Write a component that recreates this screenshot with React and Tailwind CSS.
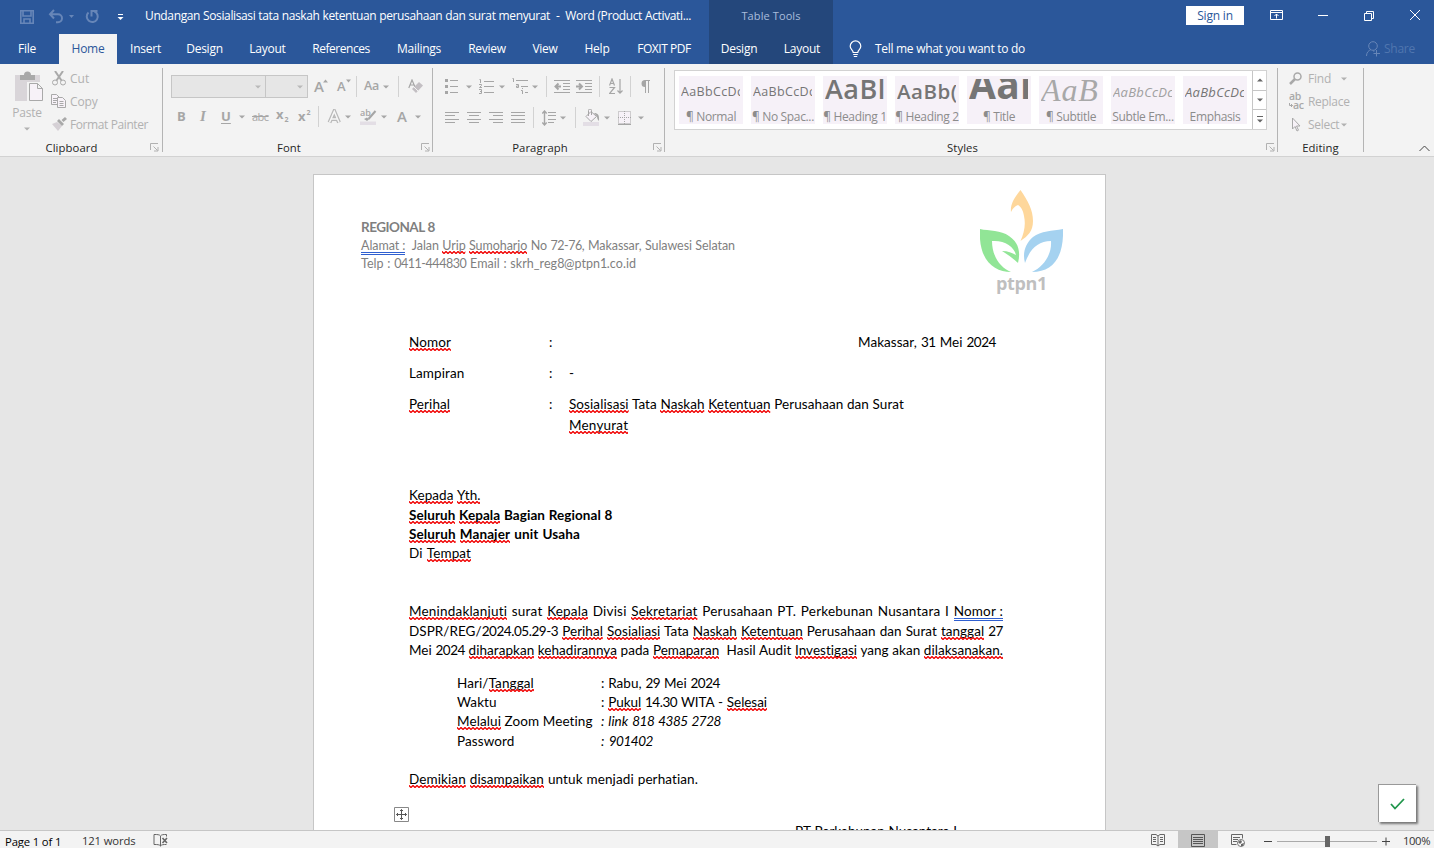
import React from "react";

const G = "#b1b1b1";

function Caret({ className = "" }) {
  return (
    <svg className={`shrink-0 ${className}`} width="6" height="4" viewBox="0 0 6 4">
      <path d="M0 .5h6L3 3.5z" fill="currentColor" />
    </svg>
  );
}

function Sep({ className = "" }) {
  return <div className={`h-[21px] w-px shrink-0 bg-[#d2d2d2] ${className}`} />;
}

function Launcher({ className = "" }) {
  return (
    <svg className={`absolute bottom-[4px] ${className}`} width="9" height="9" viewBox="0 0 9 9" fill="none" stroke={G}>
      <path d="M.5 7V.5H8M3.5 3.5l4 4M8 4v4H4" />
    </svg>
  );
}

function Group({ className, label, launcher, children }) {
  return (
    <div className={`relative flex shrink-0 flex-col ${className}`}>
      <div className="h-[76px]">{children}</div>
      <div className="h-4 text-center text-[11.3px] leading-4 tracking-[0.1px] text-[#262626]">{label}</div>
      {launcher && <Launcher className={launcher} />}
    </div>
  );
}

function GroupLine() {
  return <div className="mt-1 h-[84px] w-px shrink-0 bg-[#b4b4b4]" />;
}

function Lines({ className = "", rows, w = 14, h = 12 }) {
  return (
    <svg className={`shrink-0 ${className}`} width={w} height={h} viewBox={`0 0 ${w} ${h}`} stroke="#a6a6a6">
      {rows.map(([x1, x2, y], i) => (
        <path key={i} d={`M${x1} ${y}.5H${x2}`} />
      ))}
    </svg>
  );
}

function Wavy({ children }) {
  return (
    <span className="relative inline-block">
      {children}
      <svg className="absolute top-[15px] left-0 h-[3px] w-full" aria-hidden="true">
        <rect width="100%" height="3" fill="url(#wave)" />
      </svg>
    </span>
  );
}

function Double({ children }) {
  return (
    <span className="relative inline-block">
      {children}
      <span className="absolute top-[16px] left-0 h-[3px] w-full border-y border-[#2f5fd0]" />
    </span>
  );
}

/* Figures are set a little tighter than letters. */
function figures(text) {
  return text.split(/(\d[\d.\-]*\d|\d)/).map((s, i) =>
    /^\d/.test(s) ? <span key={i} className="tracking-[-0.45px]">{s}</span> : s
  );
}

/* _word_ gets a spelling underline, =word= a grammar underline. */
function Line({ className = "", text }) {
  return (
    <div className={`h-[19px] shrink-0 leading-[19px] whitespace-nowrap [text-align-last:justify] ${className}`}>
      {text.replace("skrh_reg8", "skrh\u0001reg8").split(/(_[^_]+_|=[^=]+=)/).map((p, i) =>
        p.startsWith("_") ? <Wavy key={i}>{p.slice(1, -1)}</Wavy>
          : p.startsWith("=") ? <Double key={i}>{p.slice(1, -1)}</Double>
            : <React.Fragment key={i}>{figures(p.replace("\u0001", "_"))}</React.Fragment>
      )}
    </div>
  );
}

const TABS = [
  ["Insert", "w-[55px]"],
  ["Design", "w-[63px]"],
  ["Layout", "w-[63px]"],
  ["References", "w-[84px] tracking-[-0.45px]"],
  ["Mailings", "w-[72px]"],
  ["Review", "w-[64px]"],
  ["View", "w-[52px]"],
  ["Help", "w-[52px]"],
  ["FOXIT PDF", "w-[82px] tracking-[-0.45px]"],
];

const STYLES = [
  ["AaBbCcDc", "¶ Normal", "text-[12.5px] tracking-[0.35px] text-[#757575]"],
  ["AaBbCcDc", "¶ No Spac...", "text-[12.5px] tracking-[0.35px] text-[#757575]"],
  ["AaBl", "¶ Heading 1", "-mt-[7px] text-[27px] font-semibold tracking-[0.5px] text-[#757575]"],
  ["AaBb(", "¶ Heading 2", "-mt-[2px] text-[20.5px] font-semibold tracking-[0.5px] text-[#757575]"],
  ["Aal", "¶ Title", "-mt-[16px] text-[39px] font-bold tracking-[0.3px] text-[#757575]"],
  ["AaB", "¶ Subtitle", "-mt-[6px] font-['Liberation_Serif',serif] text-[32px] italic tracking-[0.9px] text-[#a8a8a8]"],
  ["AaBbCcDc", "Subtle Em...", "text-[13px] italic tracking-[0.3px] text-[#a0a0a0]"],
  ["AaBbCcDc", "Emphasis", "text-[13px] italic tracking-[0.3px] text-[#757575]"],
];

function TitleBar() {
  return (
    <div className="flex h-[34px] shrink-0 text-white">
      <svg className="mt-[9px] ml-[20px] shrink-0 text-[#6786b8]" width="104" height="16" viewBox="0 0 104 16" fill="none" stroke="currentColor">
        <path strokeWidth="1.6" d="M.8 1.8h12.4v12.4H.8zM3 2v5h8V2M4 14v-4h6v4" />
        <path strokeWidth="2" d="M34 1l-4 4.200 4 4.300M30.500 5.200h7.500a4 4 0 0 1 0 8H36" />
        <path fill="currentColor" stroke="none" d="M49 6h5l-2.500 3z" />
        <path strokeWidth="2" d="M74.500 2.500a5.500 5.500 0 1 1-6 1M71.500 7.500V2h6" />
        <path stroke="#fff" d="M98 5.500h5" />
        <path fill="#fff" stroke="none" d="M97.500 8h6l-3 3z" />
      </svg>
      <Line className="mt-[6px] ml-[21px] w-[546px] text-[12px] tracking-[-0.37px]" text="Undangan Sosialisasi tata naskah ketentuan perusahaan dan surat menyurat &nbsp;-&nbsp; Word (Product Activati..." />
      <div className="ml-[18px] flex w-[124px] justify-center bg-[#24477b] pt-[7px] text-[11px] leading-[18px] tracking-[0.1px] text-[#a9bddb]">Table Tools</div>
      <div className="mt-[6px] ml-[353px] h-[19px] w-[58px] bg-white text-center text-[12px] leading-[19px] tracking-[-0.2px] text-[#2b579a]">Sign in</div>
      <svg className="mt-[9px] ml-[26px] shrink-0" width="152" height="13" viewBox="0 0 152 13" fill="none" stroke="#fff">
        <path d="M.5 1.500h12v9H.5zM.5 3.500h12M6.500 9.500V5M4.500 7l2-2 2 2" />
        <path d="M48 6.500h10M94.500 4.500h7v7h-7zM96.500 4.500v-2h7v7h-2" />
        <path d="M140 1l10 10M150 1l-10 10" />
      </svg>
    </div>
  );
}

function TabRow() {
  return (
    <div className="flex h-[30px] shrink-0 text-center text-[12px] leading-[30px] tracking-[-0.25px] whitespace-nowrap text-white">
      <div className="w-[54px]">File</div>
      <div className="mr-px ml-[5px] w-[58px] bg-[#f3f3f3] text-[#2b579a]">Home</div>
      {TABS.map(([t, c]) => <div key={t} className={c}>{t}</div>)}
      <div className="ml-[4px] flex w-[124px] bg-[#24477b]">
        <div className="w-[60px]">Design</div>
        <div className="ml-[2px] w-[62px]">Layout</div>
      </div>
      <svg className="mt-[6px] ml-[16px] shrink-0" width="13" height="18" viewBox="0 0 13 18" fill="none" stroke="#fff" strokeWidth="1.200">
        <path d="M4.200 12.500c0-2.500-3-3-3-6.300a5.300 5.300 0 0 1 10.600 0c0 3.300-3 3.800-3 6.300zM4.200 14.500h4.600M4.800 16.500h3.400" />
      </svg>
      <div className="ml-[13px] w-[150px] tracking-[-0.32px] [text-align-last:justify]">Tell me what you want to do</div>
      <svg className="mt-[7px] ml-[341px] shrink-0" width="15" height="17" viewBox="0 0 15 17" fill="none" stroke="#6786b8">
        <circle cx="7" cy="5" r="4.300" />
        <path d="M.5 15c0-3.500 2-5.500 4.500-6.500M7 10h1.500M10.500 9v6.500M7.500 12.500h6.500" />
      </svg>
      <div className="ml-[3px] text-[#5076af]">Share</div>
    </div>
  );
}

function Clipboard() {
  return (
    <Group className="w-[162px] pr-[19px]" label="Clipboard" launcher="right-[3px]">
      <div className="flex">
        <div className="flex w-[52px] shrink-0 flex-col items-center pl-[2px] text-[12px] text-[#b1b1b1]">
          <svg className="mt-[7px] ml-[5px]" width="29" height="31" viewBox="0 0 29 31">
            <path fill="#d9d5d9" d="M0 4h25v26H0z" />
            <path fill="#a9a9a9" d="M5 4h4a3.500 3.500 0 0 1 7 0h4v5H5z" />
            <path fill="#f3f3f3" d="M12 11h17v20H12z" />
            <path fill="#f7f2f8" stroke="#a9a9a9" d="M14.500 12.500h8l5 5v12h-13zM22.500 12.500v5h5" />
          </svg>
          <div className="h-[20px] leading-[21px] tracking-[-0.2px]">Paste</div>
          <Caret className="mt-[5px]" />
        </div>
        <div className="mt-[3px] flex shrink-0 flex-col text-[12px] leading-[23px] whitespace-nowrap text-[#b1b1b1]">
          <div className="flex">
            <svg className="mt-[4px] mr-[4px]" width="14" height="15" viewBox="0 0 14 15" fill="none" stroke="#a9a9a9">
              <circle cx="3" cy="11.500" r="2.500" /><circle cx="11" cy="11.500" r="2.500" />
              <path strokeWidth="2" d="M3 0l6.500 9.500M11 0L4.500 9.500" />
            </svg>
            Cut
          </div>
          <div className="flex">
            <svg className="mt-[4px] mr-[3px] -ml-px" width="16" height="15" viewBox="0 0 16 15" fill="#f7f2f8" stroke="#a9a9a9">
              <path d="M.5.500h5l3 3v7h-8zM2 4.500h4M2 6.500h4M2 8.500h3" />
              <path d="M6.500 3.500h5l3 3v7h-8zM8.500 7.500h4M8.500 9.500h4M8.500 11.500h4" />
            </svg>
            <span className="tracking-[-0.1px]">Copy</span>
          </div>
          <div className="flex">
            <svg className="mt-[4px] mr-[3px]" width="15" height="14" viewBox="0 0 15 14">
              <path fill="#d5d0d5" d="M0 7l5-2 5 4-4 5z" />
              <path fill="#a9a9a9" d="M5 4l2-2 5 5-2 2zM9.500 3L13 0l2 2-3.500 3z" />
            </svg>
            <span className="w-[78px] tracking-[-0.4px] [text-align-last:justify]">Format Painter</span>
          </div>
        </div>
      </div>
    </Group>
  );
}

function FontGroup() {
  return (
    <Group className="w-[269px] pr-[17px]" label="Font" launcher="right-[2px]">
      <div className="flex h-[43px] w-[262px] items-center pt-[2px] text-[#a6a6a6]">
        <div className="ml-[8px] flex h-[23px] w-[95px] shrink-0 items-center justify-end border border-[#c6c6c6] bg-[#e6e6e6] pr-[4px] text-[#b9b9b9]"><Caret /></div>
        <div className="-ml-px flex h-[23px] w-[43px] shrink-0 items-center justify-end border border-[#c6c6c6] bg-[#e6e6e6] pr-[4px] text-[#b9b9b9]"><Caret /></div>
        <div className="ml-[6px] flex w-[23px] shrink-0 text-[15px] font-semibold">A<svg className="mt-[4px] -ml-px" width="5" height="4"><path d="M0 3.500h5L2.500.500z" fill="currentColor" /></svg></div>
        <div className="flex w-[19px] shrink-0 text-[13px] font-semibold">A<svg className="mt-[2px]" width="5" height="4"><path d="M0 .500h5l-2.500 3z" fill="currentColor" /></svg></div>
        <Sep />
        <div className="ml-[7px] w-[17px] shrink-0 text-[12.5px] font-semibold tracking-[-0.3px]">Aa</div>
        <Caret className="ml-[2px]" />
        <Sep className="ml-[9px]" />
        <svg className="ml-[9px] shrink-0" width="15" height="15" viewBox="0 0 15 15">
          <path fill="none" stroke="#a6a6a6" strokeWidth="1.200" d="M.8 9L4 1l3 7M2 6h4" />
          <path fill="#c3bfc3" d="M4 10l7-7 4 3.500-7 7.500z" /><path stroke="#f3f3f3" d="M6 8l4 4" />
        </svg>
      </div>
      <div className="-mt-px flex h-[21px] w-[262px] items-center text-[13px] leading-[21px] text-[#a6a6a6]">
        <b className="ml-[14px] w-[23px] shrink-0">B</b>
        <i className="w-[21px] shrink-0 font-['Liberation_Serif',serif] text-[15px] font-bold">I</i>
        <b className="w-[19px] shrink-0 underline underline-offset-2">U</b>
        <Caret className="-ml-px" />
        <span className="ml-[7px] w-[24px] shrink-0 text-[11px] tracking-[-0.5px] line-through">abc</span>
        <div className="flex w-[22px] shrink-0 font-bold">x<span className="mt-[5px] ml-px text-[7px]">2</span></div>
        <div className="flex w-[21px] shrink-0 font-bold">x<span className="-mt-[4px] ml-px text-[7px]">2</span></div>
        <Sep className="-ml-px" />
        <svg className="ml-[8px] shrink-0" width="15" height="16" viewBox="0 0 15 16" fill="none">
          <path stroke="#b9b9b9" strokeWidth="4" d="M2.500 13.500L7.300 2.500l4.700 11M4.500 10h5.500" />
          <path stroke="#f7f7f7" strokeWidth="1.500" d="M2.500 13.500L7.300 2.500l4.700 11M4.500 10h5.500" />
        </svg>
        <Caret className="ml-[3px]" />
        <svg className="ml-[9px] shrink-0" width="17" height="16" viewBox="0 0 17 16">
          <text x="0" y="7" fontSize="9" fontWeight="600" fill="#a6a6a6">ab</text>
          <path stroke="#a6a6a6" strokeWidth="2" d="M15.500 2l-7 8" /><path fill="#a6a6a6" d="M4 10l3-1.500 2 2L7 12z" />
          <path fill="#e3dee5" d="M0 12.500h16V16H0z" />
        </svg>
        <Caret className="ml-[4px]" />
        <span className="ml-[10px] w-[18px] shrink-0 text-[15px] font-semibold">A</span>
        <Caret />
      </div>
    </Group>
  );
}

function Paragraph() {
  return (
    <Group className="w-[231px] pr-[17px]" label="Paragraph" launcher="right-[2px]">
      <div className="flex h-[43px] w-[231px] items-center pt-[2px] text-[#a6a6a6]">
        <svg className="ml-[12px] shrink-0" width="13" height="15" viewBox="0 0 13 15" stroke="#a6a6a6">
          <path d="M5 1.500h8M5 7.500h8M5 13.500h8" /><path strokeWidth="3" d="M0 1.500h3M0 7.500h3M0 13.500h3" />
        </svg>
        <Caret className="ml-[8px]" />
        <svg className="ml-[7px] shrink-0" width="15" height="17" viewBox="0 0 15 17" stroke="#a6a6a6" fill="none">
          <path d="M5 3.500h10M5 8.500h10M5 14.500h10" />
          <path d="M.5 1.500h1V5M0 6.500h2.500v1L.5 9.500H3M0 11.500h2.500v4H0M1 13.500h1.500" />
        </svg>
        <Caret className="ml-[5px]" />
        <svg className="ml-[7px] shrink-0" width="17" height="17" viewBox="0 0 17 17" stroke="#a6a6a6" fill="none">
          <path d="M4 2.500h12M9 8.500h7M13 14.500h3M.5.500h1V4M4 6.500h2.500v3H4.500v-1.500H6M9 12.500h1.500V16M10 10.500h1" />
        </svg>
        <Caret className="ml-[3px]" />
        <Sep className="ml-[8px]" />
        <svg className="ml-[7px] shrink-0" width="16" height="13" viewBox="0 0 16 13" stroke="#a6a6a6" fill="none">
          <path d="M0 .500h16M9 3.500h7M9 6.500h7M9 9.500h7M0 12.500h16" /><path strokeWidth="2" d="M7 6.500H1.500M4.500 3.500l-3 3 3 3" />
        </svg>
        <svg className="ml-[6px] shrink-0" width="16" height="13" viewBox="0 0 16 13" stroke="#a6a6a6" fill="none">
          <path d="M0 .500h16M9 3.500h7M9 6.500h7M9 9.500h7M0 12.500h16" /><path strokeWidth="2" d="M0 6.500h5.500M3 3.500l3 3-3 3" />
        </svg>
        <Sep className="ml-[7px]" />
        <svg className="ml-[9px] shrink-0" width="14" height="17" viewBox="0 0 14 17" stroke="#a6a6a6" fill="none">
          <path strokeWidth="1.200" d="M.5 7.500L3 1l2.500 6.500M1.300 5.500h3.400M.5 9.500h5L.5 15.500h5.500M11 1v14M8.500 12.500L11 15.200l2.500-2.700" />
        </svg>
        <Sep className="ml-[7px]" />
        <svg className="ml-[9px] shrink-0" width="10" height="13" viewBox="0 0 10 13">
          <path fill="#a6a6a6" d="M10 0v1H9v12H8V1H6v12H5V7a3.500 3.500 0 0 1 0-7z" />
        </svg>
      </div>
      <div className="flex h-[21px] w-[231px] items-center text-[#a6a6a6]">
        <Lines className="ml-[12px]" rows={[[0, 14, 0], [0, 10, 3], [0, 14, 7], [0, 10, 10]]} />
        <Lines className="ml-[8px]" rows={[[0, 14, 0], [2, 12, 3], [0, 14, 7], [2, 12, 10]]} />
        <Lines className="ml-[8px]" rows={[[0, 14, 0], [4, 14, 3], [0, 14, 7], [4, 14, 10]]} />
        <Lines className="ml-[8px]" rows={[[0, 14, 0], [0, 14, 3], [0, 14, 7], [0, 14, 10]]} />
        <Sep className="ml-[8px]" />
        <svg className="ml-[8px] shrink-0" width="15" height="16" viewBox="0 0 15 16" stroke="#a6a6a6" fill="none">
          <path d="M6 2.500h8M6 5.500h8M6 9.500h8M6 12.500h6" /><path strokeWidth="1.400" d="M2.500 1v14M.3 3.500l2.200-2.500 2.200 2.500M.3 12.500L2.500 15l2.200-2.500" />
        </svg>
        <Caret className="ml-[3px]" />
        <Sep className="ml-[9px]" />
        <svg className="ml-[7px] shrink-0" width="17" height="17" viewBox="0 0 17 17">
          <path fill="#f7f2f8" stroke="#a6a6a6" d="M8 2.500l5.500 5L8 12.500l-5-5zM5.500 7V1.500a1.500 1.500 0 0 1 3 0V6" />
          <path fill="#a6a6a6" d="M11 4c4 0 5.500 2 5 8-1-1-2-2-2-4.500z" /><path fill="#e3dee5" d="M0 13h16v4H0z" />
        </svg>
        <Caret className="ml-[4px]" />
        <svg className="ml-[8px] shrink-0" width="13" height="14" viewBox="0 0 13 14" fill="#f7f2f8" stroke="#a6a6a6">
          <path strokeDasharray="1 1" d="M.5.500h12v12H.5zM6.500 0v13M0 6.500h13" /><path d="M0 13.500h13" />
        </svg>
        <Caret className="ml-[7px]" />
      </div>
    </Group>
  );
}

function StylesGroup() {
  return (
    <Group className="w-[612px] pr-[17px]" label="Styles" launcher="right-[2px]">
      <div className="ml-[9px] flex h-[66px] w-[593px] items-end">
        <div className="flex h-[60px] w-full border border-[#d2d2d2] bg-white">
          <div className="flex flex-1 gap-2 pt-[5px] pl-[4px]">
            {STYLES.map(([sample, name, cls], i) => (
              <div key={i} className="flex h-[48px] w-[64px] flex-col overflow-hidden bg-[#f6f1f8]">
                <div className="mt-[3px] ml-[2px] flex h-[24px] w-[59px] shrink-0 items-center overflow-hidden pt-[3px]">
                  <span className={`whitespace-nowrap ${cls}`}>{sample}</span>
                </div>
                <div className="mt-[3px] h-[18px] shrink-0 text-center text-[12px] leading-[21px] tracking-[-0.35px] whitespace-nowrap text-[#8c8c8c]">{name}</div>
              </div>
            ))}
          </div>
          <div className="flex w-[14px] flex-col border-l border-[#c6c6c6] text-[#666]">
            <div className="flex flex-1 items-center justify-center border-b border-[#c6c6c6]"><Caret className="rotate-180" /></div>
            <div className="flex flex-1 items-center justify-center border-b border-[#c6c6c6]"><Caret /></div>
            <div className="flex flex-1 flex-col items-center justify-center gap-[2px]"><div className="h-px w-[6px] bg-[#666]" /><Caret /></div>
          </div>
        </div>
      </div>
    </Group>
  );
}

function Editing() {
  return (
    <Group className="w-[85px]" label="Editing">
      <div className="flex flex-col pt-[3px] pl-[11px] text-[12px] leading-[23px] tracking-[-0.2px] text-[#b1b1b1]">
        <div className="flex">
          <svg className="mt-[5px] mr-[5px]" width="14" height="13" viewBox="0 0 14 13" fill="none" stroke="#a9a9a9"><circle cx="8.500" cy="4.500" r="3.500" strokeWidth="1.500" /><path strokeWidth="2.500" d="M6 7l-5 5" /></svg>
          Find<Caret className="mt-[10px] ml-[10px]" />
        </div>
        <div className="flex">
          <div className="mt-[2px] mr-[2px] flex h-[18px] w-[17px] flex-col text-[10.5px] leading-[9px] font-semibold tracking-[-0.3px] text-[#a9a9a9]">
            <span>ab</span>
            <span className="flex"><svg className="mt-[2px] shrink-0" width="4" height="5" fill="none" stroke="#a9a9a9"><path d="M.5 0v2.500h3M2 1l1.500 1.500L2 4" /></svg>ac</span>
          </div>
          <span className="tracking-[-0.3px]">Replace</span>
        </div>
        <div className="flex">
          <svg className="mt-[4px] mr-[7px] ml-[3px]" width="9" height="15" viewBox="0 0 9 15" fill="#f7f2f8" stroke="#a9a9a9"><path d="M.5 1v11l2.500-2.500 2 4.500 1.500-.8-2-4.200H8z" /></svg>
          <span className="w-[33px] tracking-[-0.3px] whitespace-nowrap">Select</span><Caret className="mt-[10px]" />
        </div>
      </div>
    </Group>
  );
}

function Page() {
  return (
    <div className="flex h-[700px] w-[793px] shrink-0 flex-col border border-[#c6c6c6] bg-white font-[Lato,sans-serif] text-[13.5px] tracking-[0.1px] text-black">
      <div className="flex h-[158px]">
        <div className="w-[666px] pt-[43px] pl-[47px] text-[#7f7f7f]">
          <Line className="h-[18px]! w-[74px] font-bold tracking-[-0.5px]" text="REGIONAL 8" />
          <Line className="h-[18px]! w-[374px] text-[12.5px] tracking-[-0.06px]" text="=Alamat := &nbsp;Jalan _Urip_ _Sumoharjo_ No 72-76, Makassar, Sulawesi Selatan" />
          <Line className="w-[275px] text-[12.5px] tracking-[0.05px]" text="Telp : 0411-444830 Email : skrh_reg8@ptpn1.co.id" />
        </div>
        <div className="flex w-[83px] flex-col items-center pt-[15px]">
          <svg width="83" height="83" viewBox="0 0 83 83">
            <path fill="#fed79b" d="M40.500 0C48 11 53 20 53 31c0 10-5 15-12.500 20C44 43 46 35 44 26c-1-6-3-9-6-11-3 1-5 3-7 7-1-8 4-15 9.500-22z" />
            <path fill="#91e596" fillRule="evenodd" d="M0 39c9 2 21 1 29 7 9 6 12 15 9 27-5-5-10-8-16-12 6 0 10 2 14 4-2-9-12-15-24-14 0 16 9 27 19 31C14 82-2 70 0 39z" />
            <path fill="#a5d2f0" d="M83 39c1 28-10 43-31 43 11-5 20-17 19-31-13 0-21 8-26 22-3-11 1-20 8-26 8-6 19-6 30-8z" />
          </svg>
          <div className="-mt-[2px] font-['Open_Sans',sans-serif] text-[18px] leading-[24px] font-bold tracking-[-0.3px] text-[#bfbfbf]">ptpn1</div>
        </div>
      </div>
      <div className="flex flex-col pl-[95px]">
        <div className="flex h-[31px]">
          <Line className="w-[42px]" text="_Nomor_" />
          <Line className="ml-[98px] w-[309px]" text=":" />
          <Line className="w-[138px] tracking-[0.05px]" text="Makassar, 31 Mei 2024" />
        </div>
        <div className="flex h-[31px]">
          <Line className="w-[140px]" text="Lampiran" />
          <Line className="w-[20px]" text=":" />
          <Line text="-" />
        </div>
        <div className="flex h-[21px]">
          <Line className="w-[140px]" text="_Perihal_" />
          <Line className="w-[20px]" text=":" />
          <Line className="w-[335px] tracking-[0.08px]" text="_Sosialisasi_ Tata _Naskah_ _Ketentuan_ Perusahaan dan Surat" />
        </div>
        <Line className="ml-[160px] w-[60px] tracking-[0.2px]" text="_Menyurat_" />
        <Line className="mt-[51px] w-[71px] tracking-[0.05px]" text="_Kepada_ _Yth._" />
        <Line className="mt-px w-[203px] font-bold tracking-[0.08px]" text="_Seluruh_ _Kepala_ Bagian Regional 8" />
        <Line className="w-[171px] font-bold tracking-[0.12px]" text="_Seluruh_ _Manajer_ unit Usaha" />
        <Line className="w-[62px]" text="Di _Tempat_" />
        <Line className="mt-[39px] w-[594px] tracking-[0.2px]" text="_Menindaklanjuti_ surat _Kepala_ Divisi _Sekretariat_ Perusahaan PT. Perkebunan Nusantara I =Nomor :=" />
        <Line className="mt-px w-[594px] tracking-[0.04px]" text="DSPR/REG/2024.05.29-3 _Perihal_ _Sosialiasi_ Tata _Naskah_ _Ketentuan_ Perusahaan dan Surat _tanggal_ 27" />
        <Line className="w-[594px] tracking-[0.04px]" text="Mei 2024 _diharapkan_ _kehadirannya_ pada _Pemaparan_ &nbsp;Hasil Audit _Investigasi_ yang akan _dilaksanakan._" />
        <div className="mt-[14px] flex pl-[48px]">
          <Line className="w-[76px]" text="Hari/_Tanggal_" />
          <Line className="ml-[68px] w-[119px] tracking-[0.05px]" text=": Rabu, 29 Mei 2024" />
        </div>
        <div className="flex pl-[48px]">
          <Line className="w-[144px]" text="Waktu" />
          <Line className="w-[166px] tracking-[-0.05px]" text=": _Pukul_ 14.30 WITA - _Selesai_" />
        </div>
        <div className="flex h-[20px] pl-[48px]">
          <Line className="w-[135px]" text="_Melalui_ Zoom Meeting" />
          <Line className="ml-[9px] w-[120px] italic" text=": link 818 4385 2728" />
        </div>
        <div className="flex pl-[48px]">
          <Line className="w-[144px]" text="Password" />
          <Line className="w-[52px] italic" text=": 901402" />
        </div>
        <Line className="mt-[19px] w-[289px]" text="_Demikian_ _disampaikan_ untuk menjadi perhatian." />
        <svg className="mt-[18px] -ml-[15px] shrink-0" width="15" height="15" viewBox="0 0 15 15" fill="none" stroke="#555">
          <path stroke="#888" d="M.5.500h14v14H.5z" />
          <path d="M7.500 2.500v10M2.500 7.500h10M6 4l1.500-1.500L9 4M6 11l1.500 1.500L9 11M4 6L2.500 7.500 4 9M11 6l1.500 1.500L11 9" />
        </svg>
        <Line className="ml-[386px] w-[162px] tracking-[0px]" text="PT Perkebunan Nusantara I" />
      </div>
    </div>
  );
}

function StatusBar() {
  return (
    <div className="flex h-[18px] shrink-0 border-t border-[#c6c6c6] bg-[#f3f3f3] text-[11.3px] leading-[20px] tracking-[-0.15px] whitespace-nowrap text-[#333]">
      <div className="w-[77px] pt-px pl-[5px] text-black">Page 1 of 1</div>
      <div className="w-[76px] pl-[5px]">121 words</div>
      <svg className="mt-[3px] shrink-0" width="16" height="13" viewBox="0 0 16 13" fill="none" stroke="#666">
        <path d="M7.500 2v10M7.500 2c-1-1.500-3-1.500-6.500-1.500v10c3.500 0 5.500 0 6.500 1.500M7.500 2c1-1.500 3-1.500 6-1.500v2M7.500 12c1-1.500 3-1.500 6-1.500" />
        <path strokeWidth="1.600" d="M9.500 4l4.500 5M14 4L9.500 9" />
      </svg>
      <svg className="mt-[3px] ml-[982px] shrink-0" width="14" height="13" viewBox="0 0 14 13" fill="none" stroke="#666">
        <path d="M.5.500H5L7 2l2-1.500h4.500v10H9L7 12l-2-1.500H.5zM7 2v10M2 3.500h3M2 5.500h3M2 7.500h3M9 3.500h3M9 5.500h3M9 7.500h3" />
      </svg>
      <div className="ml-[13px] flex w-[40px] shrink-0 justify-center bg-[#c6c6c6] pt-[3px]">
        <svg width="14" height="13" viewBox="0 0 14 13" fill="none" stroke="#555"><path d="M.5.500h13v12H.5zM2 3.500h10M2 5.500h10M2 7.500h10M2 9.500h10" /></svg>
      </div>
      <svg className="mt-[3px] ml-[13px] shrink-0" width="15" height="14" viewBox="0 0 15 14" fill="none" stroke="#666">
        <path d="M5.500 10.500h-5V.500h11v4M2 3.500h7M2 5.500h5M2 7.500h4" />
        <circle cx="10" cy="9" r="3.500" fill="#fff" stroke="#777" /><path fill="#666" stroke="none" d="M7 8l3-2 1 2-2 2zM10 10l3-1-1 3h-2z" />
      </svg>
      <svg className="ml-[18px] shrink-0" width="128" height="17" viewBox="0 0 128 17" fill="none" stroke="#444">
        <path d="M0 10.500h8M118 10.500h8M122 6.500v8" /><path stroke="#aaa" d="M13 10.500h100" />
        <path fill="#666" stroke="none" d="M61 5h5v11h-5z" />
      </svg>
      <div className="ml-[11px] tracking-[-0.4px]">100%</div>
    </div>
  );
}

export default function App() {
  return (
    <div className="flex h-[848px] w-[1434px] flex-col overflow-hidden bg-[#2b579a] font-['Open_Sans','Noto_Sans',sans-serif]">
      <svg className="absolute h-0 w-0" aria-hidden="true">
        <defs>
          <pattern id="wave" width="4" height="3" patternUnits="userSpaceOnUse">
            <path d="M-1 -.5L2 2.500L5 -.5" fill="none" stroke="#f00000" strokeWidth="1.300" />
          </pattern>
        </defs>
      </svg>
      <TitleBar />
      <TabRow />
      <div className="relative flex h-[93px] shrink-0 border-b border-[#d2d2d2] bg-[#f3f3f3]">
        <Clipboard />
        <GroupLine />
        <FontGroup />
        <GroupLine />
        <Paragraph />
        <GroupLine />
        <StylesGroup />
        <GroupLine />
        <Editing />
        <GroupLine />
        <svg className="absolute right-[4px] bottom-[4px]" width="11" height="7" viewBox="0 0 11 7" fill="none" stroke="#444"><path d="M.5 6l5-5 5 5" /></svg>
      </div>
      <div className="relative min-h-0 flex-1 overflow-hidden bg-[#e6e6e6] pt-[17px] pl-[313px]">
        <Page />
        <div className="absolute right-[18px] bottom-[8px] flex h-[38px] w-[38px] items-center justify-center border-t border-l border-[#999] bg-white shadow-[2px_2px_2px_#777]">
          <svg width="15" height="12" viewBox="0 0 15 12" fill="none" stroke="#21964c" strokeWidth="1.800"><path d="M1 6l4 4.500L14 1" /></svg>
        </div>
      </div>
      <StatusBar />
    </div>
  );
}
